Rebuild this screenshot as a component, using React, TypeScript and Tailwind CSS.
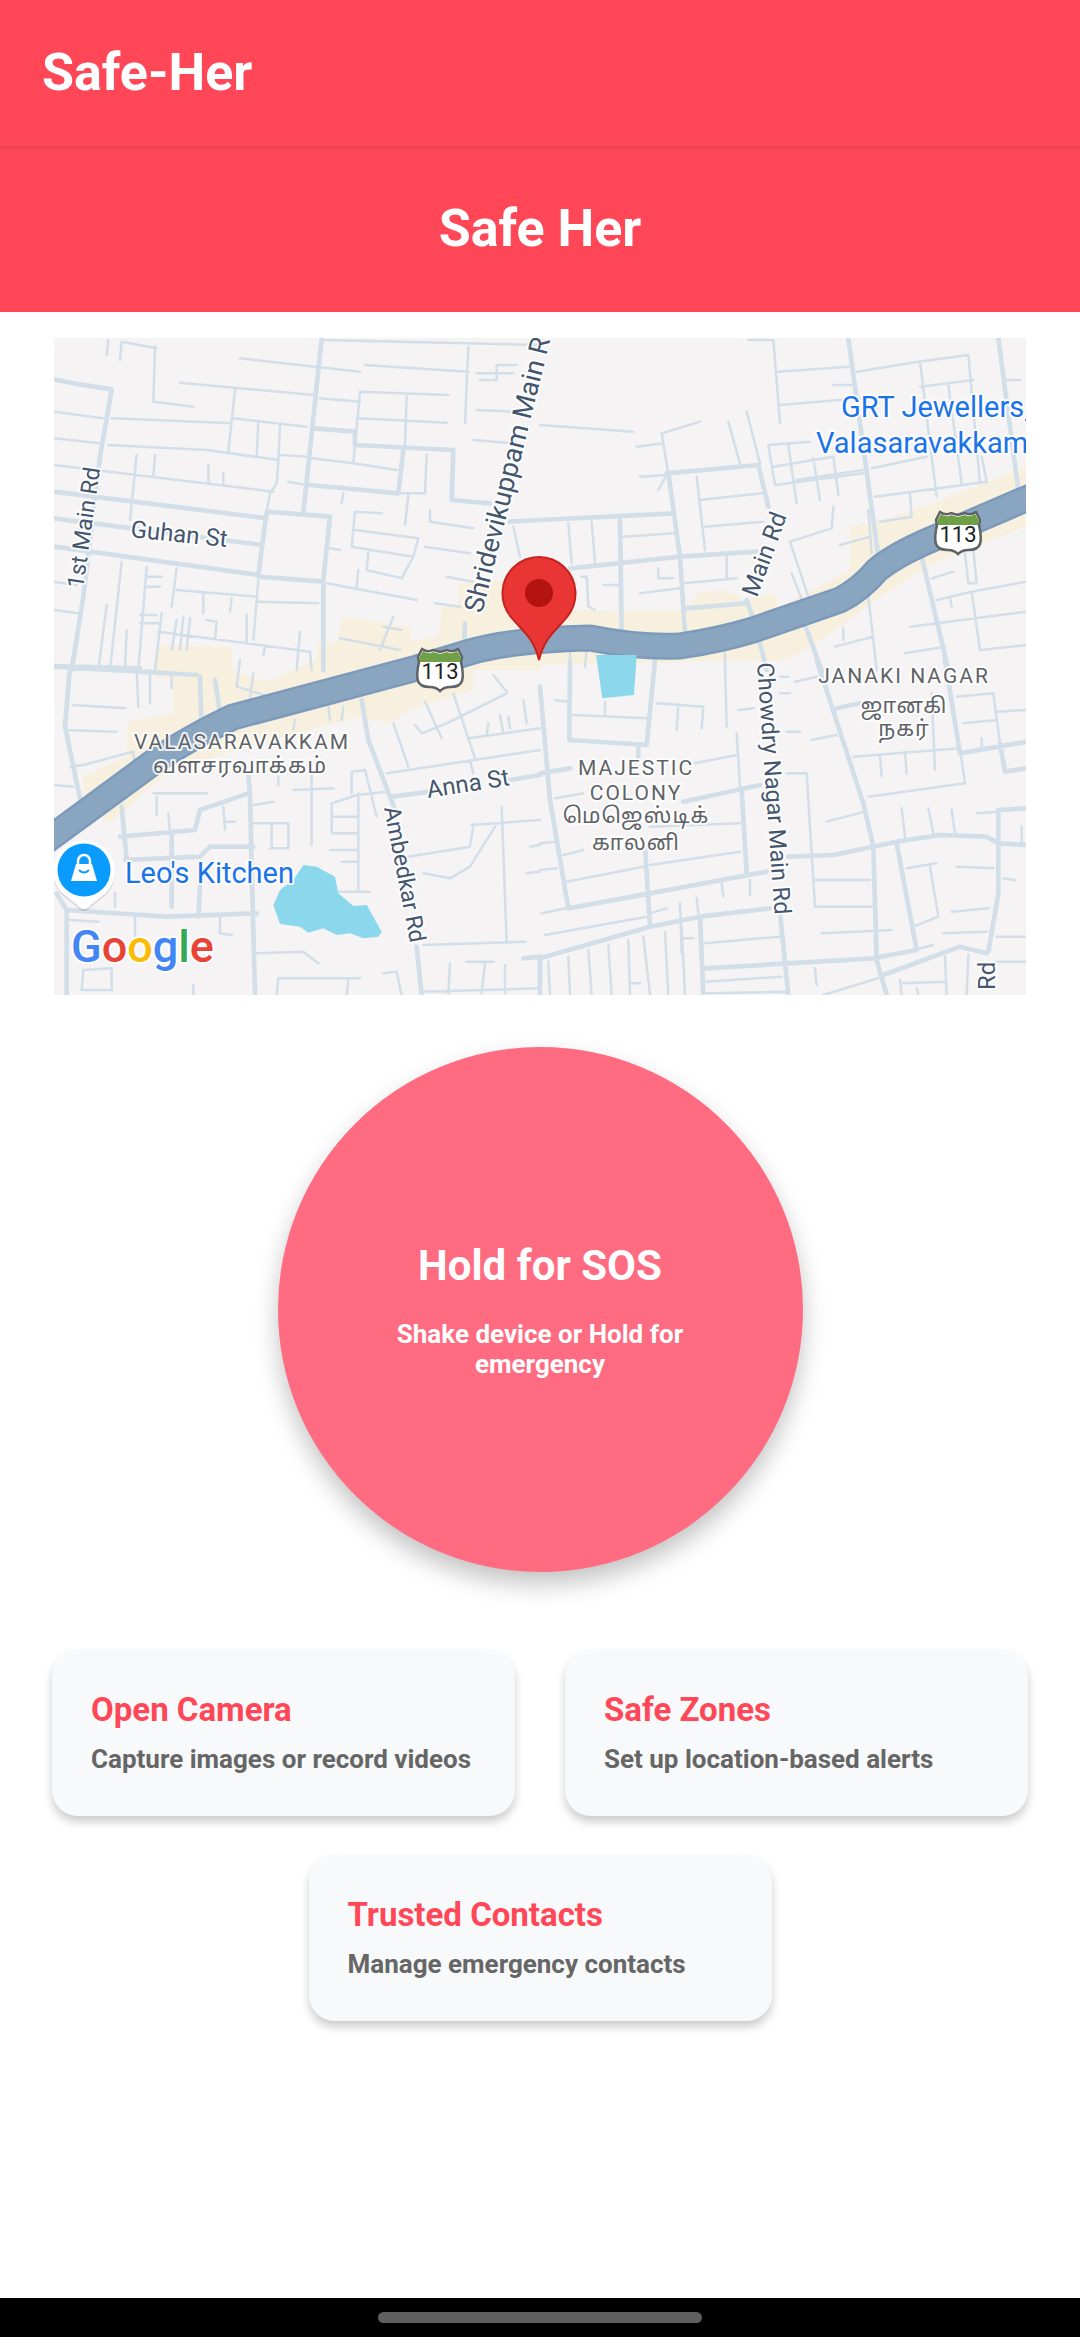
import React from "react";

type Q = { t: string; thick: string[]; thin: string[] };

const quads: Q[] = [
  {
    t: "translate(40 330) scale(0.33333)",
    thick: [
      "M42 148L100 160L215 178L180 380L130 800L95 1020",
      "M845 25L790 550",
      "M42 485L680 565",
      "M42 565L665 645",
      "M42 650L655 735",
      "M680 545L655 735",
      "M680 545L870 560L850 750L850 1020",
      "M655 740L850 755",
      "M820 295L945 305L945 345L1240 360L1235 510L1350 520",
      "M810 465L1075 490L1090 360",
      "M1410 575L1500 570",
      "M1275 880L1270 1000",
      "M42 1008L300 1015",
    ],
    thin: [
      "M850 30L1500 45",
      "M600 85L960 125",
      "M975 105L1285 125",
      "M1285 50L1275 280",
      "M345 50L340 215L460 230",
      "M205 30L200 75",
      "M245 35L240 90",
      "M245 35L350 55",
      "M420 158L820 195",
      "M840 205L960 215",
      "M585 180L565 365",
      "M215 265L575 280",
      "M580 265L800 290",
      "M960 185L1225 195",
      "M960 185L940 400L1070 420",
      "M1100 195L1095 345",
      "M955 265L1220 278",
      "M42 245L190 265",
      "M42 325L180 340",
      "M205 345L500 360L715 390L710 460L690 490L680 545",
      "M720 285L715 390",
      "M655 275L650 380",
      "M720 375L800 380",
      "M815 385L940 400",
      "M42 405L700 485",
      "M290 375L270 570",
      "M345 375L340 440",
      "M505 405L505 460",
      "M550 430L550 465",
      "M745 455L800 465",
      "M910 490L905 520",
      "M1105 495L1095 585",
      "M1160 375L1155 490L1080 490",
      "M1025 550L945 545L935 650L1120 680L1135 625L945 600",
      "M985 665L980 720L1085 745L1120 680",
      "M955 720L950 770",
      "M1170 540L1170 575L1300 595",
      "M1155 650L1290 670",
      "M870 655L900 660",
      "M1220 740L1300 755",
      "M860 760L1130 810",
      "M1185 820L1260 830",
      "M1420 590L1440 680",
      "M245 695L210 1020",
      "M320 710L295 1020",
      "M410 715L395 830",
      "M320 740L365 740",
      "M320 770L360 770",
      "M410 780L650 800",
      "M490 790L490 850",
      "M575 805L570 845",
      "M655 750L640 930",
      "M655 815L835 820",
      "M200 825L175 1020",
      "M260 900L255 1020",
      "M365 850L345 1020",
      "M300 855L350 855",
      "M300 880L355 880",
      "M410 870L395 960",
      "M430 860L420 960",
      "M450 865L440 960",
      "M500 870L530 875L525 930",
      "M355 905L810 965L815 1020",
      "M620 855L620 940",
      "M780 905L770 1020",
      "M675 945L670 975",
      "M42 840L115 850",
      "M42 755L110 765",
      "M1310 130L1420 130",
      "M1310 240L1420 245",
      "M1300 330L1420 340",
      "M1320 150L1370 150L1370 105L1430 105",
      "M1060 860L1020 960",
      "M900 925L1080 960",
      "M1030 890L1085 900",
    ],
  },
  {
    t: "translate(540 330) scale(0.33333)",
    thick: [
      "M380 430L655 405L685 530",
      "M620 810L650 900L680 1020",
      "M385 430L420 680L435 910",
      "M0 570L400 550",
      "M90 715L420 680L650 665",
      "M240 570L245 905",
      "M925 25L1015 680",
      "M1375 25L1435 480",
      "M1145 680L1225 1020",
      "M795 885L845 1020",
      "M440 835L615 820",
    ],
    thin: [
      "M625 30L700 30L720 280",
      "M715 125L925 110",
      "M950 125L1135 95L1285 75L1320 460",
      "M720 225L960 205",
      "M880 165L940 165",
      "M1140 95L1190 500",
      "M1225 165L1265 460",
      "M1140 170L1300 150",
      "M1400 150L1440 150",
      "M0 285L280 305",
      "M290 350L370 340",
      "M365 310L480 275",
      "M365 310L385 430",
      "M300 440L380 435L355 480",
      "M565 275L600 400",
      "M620 245L660 400",
      "M685 345L810 335",
      "M685 345L705 465L970 430",
      "M745 345L770 520",
      "M700 410L880 380",
      "M820 385L840 510",
      "M880 380L895 495",
      "M770 450L970 420",
      "M995 415L1160 380",
      "M1005 500L1340 455L1325 380",
      "M1110 490L1115 560L1020 575",
      "M880 530L875 595L750 635L810 815",
      "M755 730L790 820",
      "M985 540L995 670",
      "M900 645L990 620",
      "M85 580L95 700",
      "M155 575L165 700",
      "M250 620L400 610",
      "M470 440L495 660",
      "M480 510L665 490",
      "M495 590L670 575",
      "M355 715L355 745L400 745",
      "M125 740L140 740L145 830L165 840",
      "M190 765L240 765",
      "M300 790L420 775",
      "M430 760L590 745",
      "M560 680L560 745",
      "M1275 670L1285 760L1310 760L1300 660",
      "M1175 745L1240 725",
      "M1230 800L1235 830",
      "M1190 810L1295 785L1460 755",
      "M1295 785L1320 960L1460 945",
      "M1110 890L1460 845",
      "M1095 970L1215 950",
      "M985 800L1010 1020",
      "M885 950L1000 920",
      "M910 895L910 930",
      "M555 950L555 1020",
      "M345 975L340 1020",
      "M90 960L90 1020",
      "M140 960L135 1010",
    ],
  },
  {
    t: "translate(40 660) scale(0.33333)",
    thick: [
      "M90 20L75 200L125 440",
      "M480 50L485 210",
      "M525 60L545 190",
      "M965 120L985 240L1050 410L1065 450",
      "M1055 410L1170 395",
      "M1410 360L1500 345",
      "M625 340L630 400L635 620L645 1005",
      "M625 400L480 450L465 510L240 530",
      "M245 440L260 600",
      "M255 600L480 590L510 560L640 560",
      "M395 520L395 740",
      "M480 680L475 770",
      "M50 700L80 750L80 1005",
      "M80 750L380 770L650 760",
      "M1130 860L1145 1005",
      "M1450 895L1500 890L1500 1005",
      "M42 20L470 45",
    ],
    thin: [
      "M100 135L255 145",
      "M75 210L230 215",
      "M90 320L130 315",
      "M42 375L100 380",
      "M290 30L295 140",
      "M330 30L330 130",
      "M395 50L395 85",
      "M130 315L280 275L285 330",
      "M600 0L590 80L690 110",
      "M640 40L630 115",
      "M725 100L715 130",
      "M765 180L760 210",
      "M865 140L870 180",
      "M910 140L905 180",
      "M1060 190L1105 320",
      "M1125 195L1145 220L1220 190L1400 100",
      "M1155 125L1205 235",
      "M1240 100L1305 295",
      "M1285 235L1500 205",
      "M1345 190L1340 225",
      "M1380 165L1390 220",
      "M1405 170L1410 205",
      "M1450 120L1460 190",
      "M1400 95L1360 45",
      "M1040 340L1500 270",
      "M1290 300L1300 340",
      "M715 350L715 375",
      "M760 390L880 385",
      "M815 340L815 555",
      "M640 435L700 425",
      "M640 490L745 490L745 565L690 565",
      "M695 490L695 565",
      "M550 440L555 510",
      "M555 485L585 485",
      "M385 460L390 520",
      "M350 410L350 465",
      "M340 400L500 400",
      "M875 520L875 430L950 405L1040 395",
      "M935 400L935 335L975 330L1010 470",
      "M955 400L955 690",
      "M875 470L950 470",
      "M875 520L950 520",
      "M870 570L955 570",
      "M905 605L955 605",
      "M895 695L990 695",
      "M1295 495L1500 480",
      "M1300 500L1290 560L1105 590",
      "M1385 440L1400 850",
      "M1365 500L1290 620L1230 655L1150 640",
      "M1460 640L1500 635",
      "M1470 560L1500 555",
      "M1150 855L1455 845",
      "M1230 910L1225 1000",
      "M1280 905L1360 905",
      "M1335 905L1325 1000",
      "M1395 915L1395 1000",
      "M1145 995L1500 985",
      "M650 880L790 875L835 910",
      "M710 1005L715 955L960 955",
      "M925 960L920 1005",
      "M1030 940L1070 935L1085 1005",
      "M540 770L540 820L575 825",
      "M225 700L225 740",
      "M285 770L285 830",
      "M125 990L130 930L215 925L215 990L125 990",
      "M460 975L460 1005",
      "M90 780L175 785",
    ],
  },
  {
    t: "translate(540 660) scale(0.33333)",
    thick: [
      "M90 0L88 240L320 255L345 0",
      "M0 80L30 420L85 745L330 700L680 635",
      "M0 340L90 325",
      "M605 390L620 640",
      "M430 425L660 375",
      "M295 260L295 290",
      "M315 560L330 800",
      "M0 895L330 800L480 770L690 745",
      "M480 770L490 1005",
      "M720 760L745 1005",
      "M495 925L1000 895L1130 870L1070 550",
      "M745 590L880 585L1070 545L1200 525L1340 530L1375 550L1460 555",
      "M830 0L970 430L1000 560L1010 900L1040 1005",
      "M1215 0L1260 280L1460 245",
      "M1380 250L1395 335L1460 325",
      "M1375 450L1460 445",
      "M1375 450L1375 700L1345 875",
      "M1030 945L1260 860L1340 880",
      "M890 145L960 130",
    ],
    thin: [
      "M815 240L890 225",
      "M940 290L1260 265L1275 370L985 410",
      "M1020 290L1025 350",
      "M1095 275L1100 340",
      "M1175 100L1185 330",
      "M1250 110L1360 100L1380 250",
      "M1370 155L1460 150",
      "M1270 190L1370 180",
      "M1325 235L1325 260",
      "M740 340L800 340L825 740L1000 740",
      "M820 660L990 660",
      "M860 485L975 455",
      "M1085 445L1095 530",
      "M1165 445L1180 520",
      "M1235 450L1245 520",
      "M1310 460L1375 455",
      "M1445 500L1445 545",
      "M1100 625L1190 610",
      "M1170 620L1195 770L1120 800",
      "M1250 620L1360 625",
      "M1390 655L1425 660",
      "M1235 755L1345 745",
      "M1210 820L1340 815",
      "M1370 830L1460 830",
      "M1370 905L1460 905",
      "M845 820L1055 810",
      "M1120 870L1180 855",
      "M590 220L600 380",
      "M595 150L640 145",
      "M555 20L560 200",
      "M740 215L780 215",
      "M720 100L750 100",
      "M765 65L830 50",
      "M720 50L745 50",
      "M350 130L490 140L485 205",
      "M415 135L410 210",
      "M100 165L320 175",
      "M195 125L195 165",
      "M45 120L85 125",
      "M465 310L590 285",
      "M45 415L130 400",
      "M0 550L50 545",
      "M70 585L130 570",
      "M80 665L310 620",
      "M330 615L600 575",
      "M330 500L600 490",
      "M0 630L50 625",
      "M5 760L80 745",
      "M15 825L320 770",
      "M330 760L380 745",
      "M420 730L425 880",
      "M470 715L475 760",
      "M545 670L550 710",
      "M630 660L630 705",
      "M25 905L30 1005",
      "M85 890L90 1005",
      "M145 870L155 1005",
      "M205 855L215 1005",
      "M265 840L270 1005",
      "M310 830L330 1005",
      "M375 815L385 1005",
      "M425 800L435 1005",
      "M425 835L460 835",
      "M495 850L720 830",
      "M270 970L300 970",
      "M500 965L725 950",
      "M500 1000L745 995",
      "M825 925L830 975",
      "M850 1005L1030 950",
      "M1080 960L1085 1005",
      "M1130 985L1135 1005",
      "M1090 970L1215 965",
      "M1215 890L1220 1005",
      "M1285 885L1280 1005",
    ],
  },
];

const FONT = "Roboto, 'Noto Sans', 'Noto Sans Tamil', 'Lohit Tamil', sans-serif";
const HIGHWAY =
  "M46 841L140 772Q175 745 233 717L417 668L470 652Q510 640 590 638Q640 648 680 646Q720 640 753 630L840 600Q860 590 877 570Q895 555 930 540L1035 495";

function Label(props: {
  x: number;
  y: number;
  r?: number;
  size?: number;
  fill?: string;
  anchor?: "start" | "middle";
  spacing?: number;
  halo?: number;
  children: React.ReactNode;
}) {
  const { x, y, r = 0, size = 24, fill = "#44566e", anchor = "start", spacing = 0, halo = 4 } = props;
  return (
    <text
      transform={`translate(${x} ${y}) rotate(${r})`}
      fontFamily={FONT}
      fontSize={size}
      fill={fill}
      textAnchor={anchor}
      letterSpacing={spacing}
      stroke="#ffffff"
      strokeOpacity={0.85}
      strokeWidth={halo}
      strokeLinejoin="round"
      className="[paint-order:stroke]"
    >
      {props.children}
    </text>
  );
}

function Shield({ x, y }: { x: number; y: number }) {
  return (
    <g transform={`translate(${x} ${y})`}>
      <path
        d="M-22 -13L-18 -21Q-12 -17 -7 -20L0 -18L7 -20Q12 -17 18 -21L22 -13L21 -8Q24 5 22 11Q20 17 10 17Q4 17 0 21Q-4 17 -10 17Q-20 17 -22 11Q-24 5 -21 -8Z"
        fill="#ffffff"
        stroke="#5f6368"
        strokeWidth="2.5"
      />
      <path d="M-21 -12L-17 -19Q-12 -15 -7 -18L0 -16L7 -18Q12 -15 17 -19L21 -12L20 -8L-20 -8Z" fill="#6fa045" />
      <text x="0" y="9" textAnchor="middle" fontFamily={FONT} fontSize="22" fill="#202124">
        113
      </text>
    </g>
  );
}

function MapView() {
  const colored: [string, string][] = [
    ["G", "#4285f4"],
    ["o", "#ea4335"],
    ["o", "#fbbc05"],
    ["g", "#4285f4"],
    ["l", "#34a853"],
    ["e", "#ea4335"],
  ];
  return (
    <svg viewBox="54 338 972 657" className="block h-full w-full">
      <rect x="54" y="338" width="972" height="657" fill="#f5f3f4" />
      {/* built-up areas */}
      <g fill="#f8f0de">
        <path
          transform="translate(40 660) scale(0.33333)"
          d="M130 350L260 290L265 185L400 160L400 60L340 50L350 -30L575 -30L575 30L680 65L830 0L830 -50L1130 -60L1300 -60L1300 90L1110 150L1050 190L960 170L620 260L380 340L210 490L130 430Z"
        />
        <path
          transform="translate(40 330) scale(0.33333)"
          d="M880 1020L905 860L1110 890L1110 935L1200 915L1205 830L1255 825L1255 760L1400 750L1500 800L1500 1020Z M350 945L575 950L575 1020L350 1020Z"
        />
        <path
          transform="translate(540 330) scale(0.33333)"
          d="M0 830L200 845L440 840L480 785L560 780L610 810L700 790L720 830L800 790L930 720L930 590L1020 570L1180 520L1458 410L1458 590L1180 700L1100 750L980 830L830 940L740 990L0 1005Z"
        />
      </g>
      {/* roads */}
      {quads.map((q, i) => (
        <g key={i} transform={q.t} fill="none" stroke="#d3dfe8" strokeLinejoin="round" strokeLinecap="round">
          <path d={q.thin.join(" ")} strokeWidth="7.5" />
          <path d={q.thick.join(" ")} strokeWidth="14" />
        </g>
      ))}
      {/* highway */}
      <path d={HIGHWAY} fill="none" stroke="#7c9abb" strokeWidth="27" strokeLinejoin="round" />
      <path d={HIGHWAY} fill="none" stroke="#8aa5c0" strokeWidth="22" strokeLinejoin="round" />
      {/* water */}
      <g fill="#8bd8ed">
        <path
          transform="translate(40 660) scale(0.33333)"
          d="M790 615L830 620L885 650L895 700L940 738L980 735L1025 815L1015 830L970 835L930 820L890 825L850 805L805 818L780 800L720 792L700 735L720 690L760 660Z"
        />
        <path transform="translate(540 660) scale(0.33333)" d="M168 -15L290 -15L282 105L187 115Z" />
      </g>
      {/* road labels */}
      <Label x={83} y={589} r={-82} size={23}>1st Main Rd</Label>
      <Label x={130} y={537} r={6}>Guhan St</Label>
      <Label x={482} y={614} r={-76} size={27}>Shridevikuppam Main Rd</Label>
      <Label x={757} y={598} r={-70}>Main Rd</Label>
      <Label x={757} y={663} r={86} size={23.5}>Chowdry Nagar Main Rd</Label>
      <Label x={995} y={990} r={-90}>Rd</Label>
      <Label x={384} y={808} r={79} size={23}>Ambedkar Rd</Label>
      <Label x={428} y={798} r={-9}>Anna St</Label>
      {/* areas */}
      <Label x={242} y={749} anchor="middle" size={21} spacing={2} fill="#5f6368">VALASARAVAKKAM</Label>
      <Label x={240} y={773} anchor="middle" size={22} spacing={1} fill="#5f6368">வளசரவாக்கம்</Label>
      <Label x={636} y={775} anchor="middle" size={21} spacing={2} fill="#5f6368">MAJESTIC</Label>
      <Label x={636} y={800} anchor="middle" size={21} spacing={2} fill="#5f6368">COLONY</Label>
      <Label x={636} y={823} anchor="middle" size={21.5} spacing={1} fill="#5f6368">மெஜெஸ்டிக்</Label>
      <Label x={636} y={850} anchor="middle" size={21.5} spacing={1} fill="#5f6368">காலனி</Label>
      <Label x={904} y={683} anchor="middle" size={21} spacing={2} fill="#5f6368">JANAKI NAGAR</Label>
      <Label x={904} y={713} anchor="middle" size={21.5} spacing={1} fill="#5f6368">ஜானகி</Label>
      <Label x={904} y={736} anchor="middle" size={21.5} spacing={1} fill="#5f6368">நகர்</Label>
      {/* POIs */}
      <Label x={841} y={417} size={29} fill="#1a73e8">GRT Jewellers,</Label>
      <Label x={816} y={453} size={29} fill="#1a73e8">Valasaravakkam</Label>
      <Label x={125} y={883} size={29} fill="#1a73e8">Leo's Kitchen</Label>
      <Shield x={958} y={533} />
      <Shield x={440} y={670} />
      {/* POI marker */}
      <g>
        <path d="M84 911Q80 911 77 907L61 894A31 31 0 1 1 107 894L91 907Q88 911 84 911Z" fill="#000000" fillOpacity="0.12" />
        <path d="M84 909Q80 909 77 905L61 892A31 31 0 1 1 107 892L91 905Q88 909 84 909Z" fill="#ffffff" />
        <circle cx="84" cy="870" r="26.5" fill="#0a9bff" />
        <path d="M78 866V861A6 6 0 0 1 90 861V866" fill="none" stroke="#ffffff" strokeWidth="2.5" />
        <path d="M76 864H92L97 881H71Z" fill="#ffffff" />
        <path d="M79 870Q84 875 89 870" fill="none" stroke="#0a9bff" strokeWidth="2" />
      </g>
      {/* Google mark */}
      <text
        x="71"
        y="962"
        fontFamily="Roboto, sans-serif"
        fontSize="45"
        fontWeight="500"
        stroke="#ffffff"
        strokeOpacity={0.85}
        strokeWidth="4"
        strokeLinejoin="round"
        className="[paint-order:stroke]"
      >
        {colored.map(([c, f], i) => (
          <tspan key={i} fill={f}>
            {c}
          </tspan>
        ))}
      </text>
      {/* location pin */}
      <path
        d="M539 660C533 636 522 631 511 617A36.5 36.5 0 1 1 567 617C556 631 545 636 539 660Z"
        fill="#ea3535"
        stroke="#c5221f"
        strokeWidth="2"
      />
      <circle cx="539" cy="593" r="14" fill="#b31412" />
    </svg>
  );
}

function ActionCard({ title, sub }: { title: string; sub: string }) {
  return (
    <div className="flex h-[166px] w-[463px] flex-col rounded-[26px] bg-[#f8f9fa] pl-[39px] pt-[41px] shadow-[0_6px_10px_rgba(0,0,0,0.2)]">
      <div className="text-[33px] font-bold leading-[38px] text-[#ff4757]">{title}</div>
      <div className="mt-[15px] text-[26px] font-bold leading-[31px] text-[#666666]">{sub}</div>
    </div>
  );
}

export default function App() {
  return (
    <div className="flex h-[2337px] w-[1080px] flex-col bg-white font-['Roboto',sans-serif]">
      <header className="relative z-10 flex h-[146px] items-center bg-[#ff4757] pl-[42px] shadow-[0_2px_4px_rgba(0,0,0,0.12)]">
        <h1 className="text-[52px] font-bold text-white">Safe-Her</h1>
      </header>
      <div className="flex h-[166px] items-center justify-center bg-[#ff4757]">
        <h2 className="text-[52px] font-bold text-white">Safe Her</h2>
      </div>
      <div className="ml-[54px] mt-[26px] h-[657px] w-[972px]">
        <MapView />
      </div>
      <div className="mt-[52px] flex justify-center">
        <button className="flex h-[525px] w-[525px] flex-col items-center justify-center rounded-full bg-[#ff6b81] px-[100px] text-center text-white shadow-[0_12px_24px_rgba(0,0,0,0.24)]">
          <span className="text-[42px] font-bold leading-[50px]">Hold for SOS</span>
          <span className="mt-[28px] text-[26px] font-bold leading-[30px]">Shake device or Hold for emergency</span>
        </button>
      </div>
      <div className="mt-[78px] flex justify-center gap-[50px]">
        <ActionCard title="Open Camera" sub="Capture images or record videos" />
        <ActionCard title="Safe Zones" sub="Set up location-based alerts" />
      </div>
      <div className="mt-[39px] flex justify-center">
        <ActionCard title="Trusted Contacts" sub="Manage emergency contacts" />
      </div>
      <div className="mt-auto flex h-[39px] items-start justify-center bg-black pt-[14px]">
        <div className="h-[11px] w-[324px] rounded-full bg-[#5f5f5f]" />
      </div>
    </div>
  );
}
